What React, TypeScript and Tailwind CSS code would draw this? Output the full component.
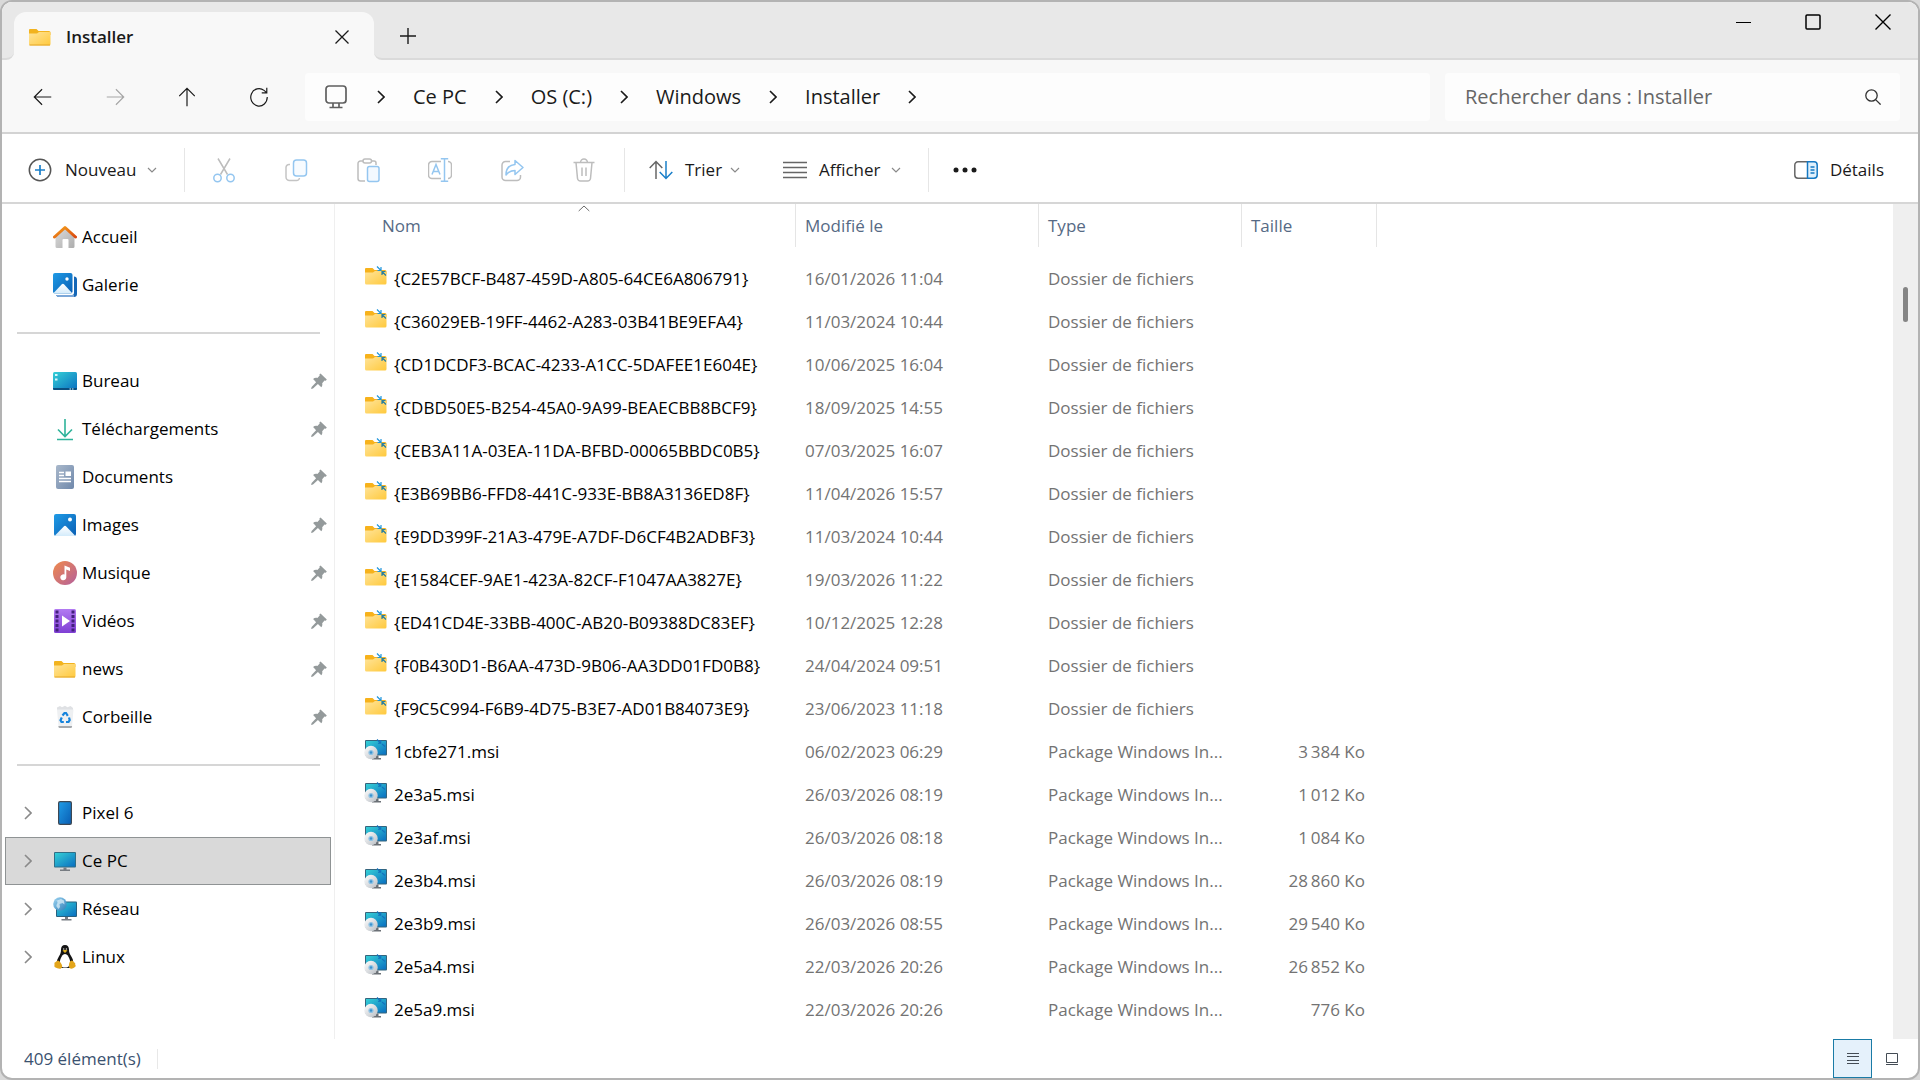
import React, { useState } from 'react';

type EntryKind = 'folder' | 'msi';

interface Entry {
  name: string;
  date: string;
  kind: EntryKind;
  size?: string;
}

interface Place {
  label: string;
  icon: React.ReactNode;
}

const ENTRIES: Entry[] = [
  { name: '{C2E57BCF-B487-459D-A805-64CE6A806791}', date: '16/01/2026 11:04', kind: 'folder' },
  { name: '{C36029EB-19FF-4462-A283-03B41BE9EFA4}', date: '11/03/2024 10:44', kind: 'folder' },
  { name: '{CD1DCDF3-BCAC-4233-A1CC-5DAFEE1E604E}', date: '10/06/2025 16:04', kind: 'folder' },
  { name: '{CDBD50E5-B254-45A0-9A99-BEAECBB8BCF9}', date: '18/09/2025 14:55', kind: 'folder' },
  { name: '{CEB3A11A-03EA-11DA-BFBD-00065BBDC0B5}', date: '07/03/2025 16:07', kind: 'folder' },
  { name: '{E3B69BB6-FFD8-441C-933E-BB8A3136ED8F}', date: '11/04/2026 15:57', kind: 'folder' },
  { name: '{E9DD399F-21A3-479E-A7DF-D6CF4B2ADBF3}', date: '11/03/2024 10:44', kind: 'folder' },
  { name: '{E1584CEF-9AE1-423A-82CF-F1047AA3827E}', date: '19/03/2026 11:22', kind: 'folder' },
  { name: '{ED41CD4E-33BB-400C-AB20-B09388DC83EF}', date: '10/12/2025 12:28', kind: 'folder' },
  { name: '{F0B430D1-B6AA-473D-9B06-AA3DD01FD0B8}', date: '24/04/2024 09:51', kind: 'folder' },
  { name: '{F9C5C994-F6B9-4D75-B3E7-AD01B84073E9}', date: '23/06/2023 11:18', kind: 'folder' },
  { name: '1cbfe271.msi', date: '06/02/2023 06:29', kind: 'msi', size: '3\u2009384 Ko' },
  { name: '2e3a5.msi', date: '26/03/2026 08:19', kind: 'msi', size: '1\u2009012 Ko' },
  { name: '2e3af.msi', date: '26/03/2026 08:18', kind: 'msi', size: '1\u2009084 Ko' },
  { name: '2e3b4.msi', date: '26/03/2026 08:19', kind: 'msi', size: '28\u2009860 Ko' },
  { name: '2e3b9.msi', date: '26/03/2026 08:55', kind: 'msi', size: '29\u2009540 Ko' },
  { name: '2e5a4.msi', date: '22/03/2026 20:26', kind: 'msi', size: '26\u2009852 Ko' },
  { name: '2e5a9.msi', date: '22/03/2026 20:26', kind: 'msi', size: '776 Ko' },
];

const TYPE_LABEL: Record<EntryKind, string> = {
  folder: 'Dossier de fichiers',
  msi: 'Package Windows In...',
};

const PATH = ['Ce PC', 'OS (C:)', 'Windows', 'Installer'];

// Gradients shared by the coloured icons
const IconDefs = () => (
  <svg width="0" height="0" className="absolute" aria-hidden="true">
    <defs>
      <linearGradient id="g-folder" x1="0" y1="0" x2="1" y2="1">
        <stop offset="0" stopColor="#ffe49a" />
        <stop offset="1" stopColor="#ffc93c" />
      </linearGradient>
      <linearGradient id="g-screen" x1="0" y1="0" x2="1" y2="1">
        <stop offset="0" stopColor="#35d0d6" />
        <stop offset="1" stopColor="#0a6fc0" />
      </linearGradient>
      <linearGradient id="g-photo" x1="0" y1="0" x2="1" y2="1">
        <stop offset="0" stopColor="#1f9be6" />
        <stop offset="1" stopColor="#0a5fb4" />
      </linearGradient>
      <linearGradient id="g-snow" x1="0" y1="0" x2="0" y2="1">
        <stop offset="0" stopColor="#ffffff" />
        <stop offset="1" stopColor="#d3ebfb" />
      </linearGradient>
      <linearGradient id="g-roof" x1="0" y1="0" x2="1" y2="1">
        <stop offset="0" stopColor="#f6a31c" />
        <stop offset="1" stopColor="#d9480f" />
      </linearGradient>
      <linearGradient id="g-wall" x1="0" y1="0" x2="1" y2="1">
        <stop offset="0" stopColor="#dcdcdc" />
        <stop offset="1" stopColor="#adadad" />
      </linearGradient>
      <linearGradient id="g-doc" x1="0" y1="0" x2="1" y2="1">
        <stop offset="0" stopColor="#a9b8cb" />
        <stop offset="1" stopColor="#6f88ab" />
      </linearGradient>
      <linearGradient id="g-music" x1="0" y1="0" x2="1" y2="1">
        <stop offset="0" stopColor="#f08a4b" />
        <stop offset="1" stopColor="#b4609c" />
      </linearGradient>
      <linearGradient id="g-video" x1="0" y1="0" x2="0" y2="1">
        <stop offset="0" stopColor="#b27af2" />
        <stop offset="1" stopColor="#7f3fd4" />
      </linearGradient>
      <linearGradient id="g-disc" x1="0" y1="0" x2="1" y2="1">
        <stop offset="0" stopColor="#ffffff" />
        <stop offset="1" stopColor="#b9bec4" />
      </linearGradient>
      <linearGradient id="g-globe" x1="0" y1="0" x2="1" y2="1">
        <stop offset="0" stopColor="#9fd6f3" />
        <stop offset="1" stopColor="#2f7fb8" />
      </linearGradient>
    </defs>
  </svg>
);

const FolderIcon = () => (
  <svg width="24" height="24" viewBox="0 0 24 24" aria-hidden="true">
    <path d="M1 5a1 1 0 0 1 1-1h6.5l2 2H21a1.500 1.500 0 0 1 1.500 1.500V10H1z" fill="#f2b31f" />
    <path d="M1 8.500h8l2-1.500h10.500a1 1 0 0 1 1 1V19a1.500 1.500 0 0 1-1.500 1.500H2.500A1.500 1.500 0 0 1 1 19z" fill="url(#g-folder)" />
    <path d="M1.500 20h20.500" stroke="#e3a62a" strokeWidth="1" />
  </svg>
);

const CompressedFolderIcon = () => (
  <svg width="24" height="24" viewBox="0 3 24 24" overflow="visible" aria-hidden="true">
    <path d="M1 5a1 1 0 0 1 1-1h6.500l2 2H21a1.500 1.500 0 0 1 1.500 1.500V10H1z" fill="#f7b21b" />
    <path d="M1 8.500h8l2-1.500h10.500a1 1 0 0 1 1 1V19a1.500 1.500 0 0 1-1.500 1.500H2.500A1.500 1.500 0 0 1 1 19z" fill="url(#g-folder)" />
    <path d="M13 2.500l3.500 3.500M17 3v3.500H13.500" stroke="#2196dc" strokeWidth="1.200" fill="none" />
    <path d="M22 11.500l-3.500-3.500M18 11V7.500H21.500" stroke="#2b7f9f" strokeWidth="1.200" fill="none" />
  </svg>
);

const MsiIcon = () => (
  <svg width="24" height="24" viewBox="0 3 24 24" overflow="visible" aria-hidden="true">
    <rect x="1" y="3" width="22" height="15.500" rx="1" fill="#35657d" />
    <rect x="2" y="4" width="20" height="13.500" fill="url(#g-screen)" />
    <path d="M11.500 18.500h3V21h2.500v1.500H8V21h3.500z" fill="#6b7076" />
    <path d="M13 2.500l3.500 3.500M16.800 3v3.300H14M21 9.500l-3-2.500" stroke="#1372bd" strokeWidth="1.100" fill="none" />
    <circle cx="7" cy="15.500" r="6.700" fill="url(#g-disc)" />
    <circle cx="7" cy="15.500" r="2.600" fill="#8fc3e4" />
    <circle cx="7" cy="15.500" r="1.200" fill="#3b93cf" />
  </svg>
);

const HomeIcon = () => (
  <svg width="24" height="24" viewBox="0 0 24 24" aria-hidden="true">
    <path d="M2.500 11L12 2.500 21.500 11v10.500a1.500 1.500 0 0 1-1.500 1.500h-4.500v-8a1 1 0 0 0-1-1h-4a1 1 0 0 0-1 1v8H4a1.500 1.500 0 0 1-1.500-1.500z" fill="url(#g-wall)" />
    <path d="M1.500 12L12 2.500 22.500 12" stroke="url(#g-roof)" strokeWidth="3" strokeLinecap="round" strokeLinejoin="round" fill="none" />
  </svg>
);

const GalleryIcon = () => (
  <svg width="24" height="24" viewBox="0 0 24 24" aria-hidden="true">
    <path d="M21 3.500c1.800.2 3 1 3 3V21a3 3 0 0 1-3 3H6c-1.500 0-2.500-.7-2.800-2H19a2 2 0 0 0 2-2z" fill="#1567b7" />
    <path d="M3.200 22H21v2H6c-1.500 0-2.500-.7-2.800-2z" fill="#7ba7d8" />
    <rect x="0" y="0" width="19.500" height="20.500" rx="2" fill="url(#g-photo)" />
    <path d="M.6 20L8.600 11.500a1.800 1.800 0 0 1 2.600 0L19 20c-.3.300-.7.500-1.200.5H2c-.6 0-1-.2-1.400-.5z" fill="url(#g-snow)" />
    <circle cx="14" cy="6" r="1.700" fill="#fff" />
  </svg>
);

const DesktopIcon = () => (
  <svg width="24" height="24" viewBox="0 0 24 24" aria-hidden="true">
    <rect x="0" y="3" width="24" height="18" rx="1.500" fill="url(#g-screen)" />
    <path d="M0 19h24v.8a1.200 1.200 0 0 1-1.200 1.200H1.200A1.200 1.200 0 0 1 0 19.800z" fill="#0b4f80" />
    <path d="M2 5h2.500v2H2zM2 9.500h2.500v2H2zM16.500 19.500h1.500v1h-1.500zM19 19.500h1.500v1H19z" fill="#d7f7fb" />
  </svg>
);

const DownloadsIcon = () => (
  <svg width="24" height="24" viewBox="0 0 24 24" fill="none" stroke="#2fb39a" strokeWidth="1.600" aria-hidden="true">
    <path d="M12 2v17M5 12.500l7 7 7-7M4 22.500h16" />
  </svg>
);

const DocumentsIcon = () => (
  <svg width="24" height="24" viewBox="0 0 24 24" aria-hidden="true">
    <rect x="3" y="0" width="18" height="24" rx="2" fill="url(#g-doc)" />
    <path d="M6 7.500h5M6 10.500h5M6 13.500h12M6 16.500h12" stroke="#fff" strokeWidth="1.300" />
    <rect x="12.500" y="6.500" width="5.500" height="4.500" fill="#fff" />
  </svg>
);

const PicturesIcon = () => (
  <svg width="24" height="24" viewBox="0 0 24 24" aria-hidden="true">
    <rect x="1" y="1" width="22" height="22" rx="2" fill="url(#g-photo)" />
    <path d="M2 22.400l8.800-9a1.700 1.700 0 0 1 2.400 0l8.800 9c-.3.400-.6.600-1 .6H3c-.4 0-.7-.2-1-.6z" fill="url(#g-snow)" />
    <circle cx="17" cy="6.500" r="2" fill="#fff" />
  </svg>
);

const MusicIcon = () => (
  <svg width="24" height="24" viewBox="0 0 24 24" aria-hidden="true">
    <circle cx="12" cy="12" r="12" fill="url(#g-music)" />
    <path d="M11.500 4.500l5.500 2.300v3.200l-3.700-1.500v7.800a3 3 0 1 1-1.800-2.700z" fill="#fff" />
  </svg>
);

const VideosIcon = () => (
  <svg width="24" height="24" viewBox="0 0 24 24" aria-hidden="true">
    <rect x="1" y="0" width="22" height="24" rx="1.500" fill="url(#g-video)" />
    <path d="M2.500 1.500h3v3h-3zM2.500 6h3v3h-3zM2.500 10.500h3v3h-3zM2.500 15h3v3h-3zM2.500 19.500h3v3h-3zM18.500 1.500h3v3h-3zM18.500 6h3v3h-3zM18.500 10.500h3v3h-3zM18.500 15h3v3h-3zM18.500 19.500h3v3h-3z" fill="#43207c" />
    <path d="M9 6.500v11l8-5.500z" fill="#fff" />
  </svg>
);

const RecycleIcon = () => (
  <svg width="24" height="24" viewBox="0 0 24 24" aria-hidden="true">
    <path d="M4 2.500l3-1.500 2 1.200L12 .8l2.500 1.400L17.500 1l2.500 2v2H4z" fill="#dfe1e4" />
    <path d="M4 4.500h16.500L19 21.500a1.500 1.500 0 0 1-1.500 1.500H7a1.500 1.500 0 0 1-1.500-1.500z" fill="#eef0f2" />
    <path d="M5.400 21h13.700l-.1.900a1.300 1.300 0 0 1-1.200 1.100H6.800a1.300 1.300 0 0 1-1.300-1.100z" fill="#a5a9ad" />
    <g fill="none" stroke="#1583dc" strokeWidth="2.200">
      <path d="M9.500 10.500l2-2.500h1.500l1.800 2.800" />
      <path d="M16 12.500l.7 2.500-1.200 2h-2.500" />
      <path d="M10.800 17H8.500l-1-1.800 1.300-2.700" />
    </g>
  </svg>
);

const PhoneIcon = () => (
  <svg width="24" height="24" viewBox="0 0 24 24" aria-hidden="true">
    <rect x="5" y="0" width="14" height="24" rx="2" fill="#3d4854" />
    <rect x="6.200" y="1.200" width="11.600" height="21.600" rx="1" fill="url(#g-photo)" />
  </svg>
);

const ComputerIcon = () => (
  <svg width="24" height="24" viewBox="0 0 24 24" aria-hidden="true">
    <rect x="1" y="3" width="22" height="15.500" rx="1" fill="#2f6f87" />
    <rect x="2" y="4" width="20" height="13.500" fill="url(#g-screen)" />
    <path d="M10.500 18.500h3V20.500H17V22H7v-1.500h3.500z" fill="#777c82" />
  </svg>
);

const NetworkIcon = () => (
  <svg width="24" height="24" viewBox="0 0 24 24" aria-hidden="true">
    <rect x="3" y="4.500" width="21" height="15.500" rx="1" fill="#28617f" />
    <rect x="4" y="5.500" width="19" height="13.500" fill="url(#g-screen)" />
    <path d="M12 20h3v2h3.500v1.500H8.500V22H12z" fill="#777c82" />
    <circle cx="7" cy="7" r="6.800" fill="url(#g-globe)" />
    <path d="M1.500 4.500C3 3 4.500 4 4.500 5.500S3 7.500 3.500 9.500L5.500 12 7 10l-.5-3 3-1 2 1.500-.5-4L8 2z" fill="#e3f2fb" fillOpacity=".7" />
  </svg>
);

const LinuxIcon = () => (
  <svg width="24" height="24" viewBox="0 0 24 24" aria-hidden="true">
    <path d="M12 0c2.700 0 4 1.800 4 4.500 0 3 .6 4.200 2.200 6.700 1.400 2.200 2.300 4.300 2 7.300L17 23H7.500L3.800 18.500c-.2-3 1-5 2.200-7.200C7.400 9 8 7.500 8 4.500 8 1.800 9.300 0 12 0z" fill="#151515" />
    <path d="M12 9c2.300 0 3.500 2.500 4.500 5s.8 5-.5 7c-.8 1-2.300 1.500-4 1.500S8.800 22 8 21c-1.300-2-1.500-4.500-.5-7S9.700 9 12 9z" fill="#fff" />
    <path d="M9.500 5.500L12 4.700l2.500.8L12 8z" fill="#e0b020" />
    <circle cx="10.700" cy="4" r=".7" fill="#ddd" />
    <circle cx="13.400" cy="4" r=".7" fill="#ddd" />
    <path d="M5 15.500c1.500 0 2.800 2.500 3.800 4.200.9 1.700 0 4-2 4-1.800 0-3.300-1-4.800-1.500-1-.5-.5-1.800-.5-3s-.3-1.700.8-2 1.500-1.700 2.700-1.700z" fill="#e3a51a" />
    <path d="M19 15.500c1 0 1.300 1.200 2 1.800 1 .7 1.500.8 1.200 1.700-.2 1 1 1.500.3 2.500-1 1-2.700 2.200-4.300 2.200-2 0-2.700-2-2.200-4.200.3-1.700.8-4 3-4z" fill="#e3a51a" />
  </svg>
);

const PinIcon = () => (
  <svg width="16" height="16" viewBox="0 0 16 16" fill="#949a9b" aria-hidden="true">
    <path d="M9.500.4L15.800 6.500l-1 1.300-1.300-.2-2.300 2.600c.4 1.600 0 3-.9 4.100L6.900 11.100 2 15.600l-1.900.4.500-1.900 4.500-4.900-3-3.200c1.200-1.100 2.700-1.500 4.300-1L8.700 2.600l-.3-1.200z" />
  </svg>
);

const ChevronRight = ({ className }: { className?: string }) => (
  <svg width="8" height="14" viewBox="0 0 8 14" fill="none" stroke="currentColor" strokeWidth="1.600" className={className} aria-hidden="true">
    <path d="M1 1l6 6-6 6" />
  </svg>
);

const ChevronDown = () => (
  <svg width="10" height="10" viewBox="0 0 10 10" fill="none" stroke="#8a8a8a" strokeWidth="1.200" aria-hidden="true">
    <path d="M1 3l4 4 4-4" />
  </svg>
);

const NAV_BUTTONS = [
  { label: 'Précédent', d: 'M21 12H3M11 3.500L2.500 12l8.500 8.500', color: 'text-[#1a1a1a]' },
  { label: 'Suivant', d: 'M3 12h18M13 3.500l8.500 8.500-8.500 8.500', color: 'text-[#a6a6a6]' },
  { label: 'Dossier parent', d: 'M12 22V2.500M3.500 11L12 2.500l8.500 8.500', color: 'text-[#1a1a1a]' },
  { label: 'Actualiser', d: 'M21 12a9 9.500 0 1 1-3.500-7.200L20 7M20.500 2v5.500H15', color: 'text-[#1a1a1a]' },
];

const EDIT_ACTIONS: Place[] = [
  {
    label: 'Couper',
    icon: (
      <>
        <path d="M6 .5l9.500 16M18 .5L8.500 16.500" stroke="#bdbdbd" />
        <circle cx="5.500" cy="20" r="3.700" stroke="#94c6f0" />
        <circle cx="18.500" cy="20" r="3.700" stroke="#94c6f0" />
      </>
    ),
  },
  {
    label: 'Copier',
    icon: (
      <>
        <path d="M6 6.500H5a3 3 0 0 0-3 3V19a3.500 3.500 0 0 0 3.500 3.500h7a3 3 0 0 0 3-2.500" stroke="#c4c4c4" />
        <rect x="9.500" y="2" width="13" height="16" rx="3" stroke="#94c6f0" fill="#f7fbff" />
      </>
    ),
  },
  {
    label: 'Coller',
    icon: (
      <>
        <path d="M7 3H4.500A2.500 2.500 0 0 0 2 5.500v15A2.500 2.500 0 0 0 4.500 23H9M15.500 3H18a2 2 0 0 1 2 2v2" stroke="#bdbdbd" />
        <rect x="7" y="1" width="8.500" height="4" rx="2" stroke="#bdbdbd" />
        <rect x="11.500" y="8.500" width="11.500" height="15" rx="2" stroke="#94c6f0" fill="#f3f9ff" />
      </>
    ),
  },
  {
    label: 'Renommer',
    icon: (
      <>
        <path d="M13 3.500H4a3.500 3.500 0 0 0-3.500 3.500v10A3.500 3.500 0 0 0 4 20.500h9M20 3.500a3.500 3.500 0 0 1 3.500 3.500v10a3.500 3.500 0 0 1-3.500 3.500" stroke="#bdbdbd" />
        <path d="M16.500.8v22.400M12.800.8h7.400M12.800 23.200h7.400M4 16.500L8 6.500l4 10M5.300 13.500h5.400" stroke="#94c6f0" />
      </>
    ),
  },
  {
    label: 'Partager',
    icon: (
      <>
        <path d="M10 3.500H5.500A3.500 3.500 0 0 0 2 7v12a3.500 3.500 0 0 0 3.500 3.500H17a3.500 3.500 0 0 0 3.500-3.500v-2" stroke="#bdbdbd" />
        <path d="M15 2.500l8 7-8 7v-4c-4 0-6.500 1-9 4.500 0-6 3-10 9-10.500z" stroke="#94c6f0" strokeLinejoin="round" />
      </>
    ),
  },
  {
    label: 'Supprimer',
    icon: (
      <>
        <path d="M1.500 4.500h21M8.500 4.500a3.500 3.500 0 0 1 7 0M4 4.500l1.500 16A3 3 0 0 0 8.500 23h7a3 3 0 0 0 3-2.500l1.500-16M10 9.500v8.500M14 9.500v8.500" stroke="#bdbdbd" />
      </>
    ),
  },
];

const SHORTCUTS: Place[] = [
  { label: 'Bureau', icon: <DesktopIcon /> },
  { label: 'Téléchargements', icon: <DownloadsIcon /> },
  { label: 'Documents', icon: <DocumentsIcon /> },
  { label: 'Images', icon: <PicturesIcon /> },
  { label: 'Musique', icon: <MusicIcon /> },
  { label: 'Vidéos', icon: <VideosIcon /> },
  { label: 'news', icon: <FolderIcon /> },
  { label: 'Corbeille', icon: <RecycleIcon /> },
];

const DEVICES: Place[] = [
  { label: 'Pixel 6', icon: <PhoneIcon /> },
  { label: 'Ce PC', icon: <ComputerIcon /> },
  { label: 'Réseau', icon: <NetworkIcon /> },
  { label: 'Linux', icon: <LinuxIcon /> },
];

const TitleBar = () => (
  <div className="flex h-[58px] bg-[#f8f8f8]">
    <div className="w-3 rounded-br-lg border-b-2 border-[#dadada] bg-[#e8e8e8]" />
    <div className="flex w-[360px] bg-[#e8e8e8] pt-[10px]">
      <div className="flex flex-1 items-center rounded-t-xl bg-[#f8f8f8] pl-[14px] pr-6 pt-px">
        <FolderIcon />
        <span className="ml-[14px] flex-1 text-[17px] font-semibold">Installer</span>
        <button aria-label="Fermer l'onglet">
          <svg width="16" height="16" viewBox="0 0 16 16" stroke="#1a1a1a" strokeWidth="1.300" aria-hidden="true">
            <path d="M1.500 1.500l13 13M14.500 1.500l-13 13" />
          </svg>
        </button>
      </div>
    </div>
    <div className="flex flex-1 justify-between rounded-bl-lg border-b-2 border-[#dadada] bg-[#e8e8e8]">
      <button aria-label="Nouvel onglet" className="ml-[26px] mt-3">
        <svg width="16" height="16" viewBox="0 0 16 16" stroke="#1a1a1a" strokeWidth="1.400" aria-hidden="true">
          <path d="M8 0v16M0 8h16" />
        </svg>
      </button>
      <div className="flex h-10">
        <button aria-label="Réduire" className="flex w-[70px] items-center justify-center">
          <svg width="16" height="16" viewBox="0 0 16 16" stroke="#000" aria-hidden="true">
            <path d="M1 8.500h15" />
          </svg>
        </button>
        <button aria-label="Agrandir" className="flex w-[70px] items-center justify-center">
          <svg width="16" height="16" viewBox="0 0 16 16" fill="none" stroke="#000" strokeWidth="1.500" aria-hidden="true">
            <rect x="1" y="1" width="14" height="14" rx="1" />
          </svg>
        </button>
        <button aria-label="Fermer" className="flex w-[70px] items-center justify-center">
          <svg width="16" height="16" viewBox="0 0 16 16" stroke="#000" strokeWidth="1.400" aria-hidden="true">
            <path d="M.5.500l15 15M15.500.500l-15 15" />
          </svg>
        </button>
      </div>
    </div>
  </div>
);

const AddressBar = () => (
  <div className="flex h-[74px] items-center border-b-2 border-[#d3d3d3] bg-[#f8f8f8] pl-[5px] pr-[18px] pt-[2px]">
    {NAV_BUTTONS.map((b) => (
      <button key={b.label} aria-label={b.label} className={`flex w-[72px] justify-center ${b.color}`}>
        <svg width="22" height="22" viewBox="0 0 24 24" fill="none" stroke="currentColor" strokeWidth="1.300" aria-hidden="true">
          <path d={b.d} />
        </svg>
      </button>
    ))}
    <nav aria-label="Chemin" className="ml-[10px] flex h-12 flex-1 items-center rounded bg-[#fdfdfd] pl-5 text-[20px]">
      <svg width="22" height="24" viewBox="0 0 22 24" fill="none" stroke="#5f5f5f" strokeWidth="1.700" aria-hidden="true">
        <rect x="1" y="1" width="20" height="17" rx="3" />
        <path d="M8 18v4M14 18v4M4.500 22.500h13" />
      </svg>
      <ChevronRight className="ml-[30px]" />
      {PATH.map((part) => (
        <React.Fragment key={part}>
          <a href="#" className="ml-7">{part}</a>
          <ChevronRight className="ml-7" />
        </React.Fragment>
      ))}
    </nav>
    <div className="ml-[15px] flex h-12 w-[455px] items-center rounded bg-[#fdfdfd] pl-5 pr-[19px]">
      <input
        type="search"
        aria-label="Rechercher dans : Installer"
        placeholder="Rechercher dans : Installer"
        className="min-w-0 flex-1 bg-transparent text-[20px] outline-none placeholder:text-[#666666]"
      />
      <svg width="16" height="16" viewBox="0 0 16 16" fill="none" stroke="#333" strokeWidth="1.300" aria-hidden="true">
        <circle cx="6.500" cy="6.500" r="5.700" />
        <path d="M10.600 10.600l5 5" />
      </svg>
    </div>
  </div>
);

const Separator = () => <div className="h-11 w-px shrink-0 bg-[#e6e6e6]" />;

const Toolbar = () => (
  <div className="flex h-[70px] items-center border-b-2 border-[#d6d6d6] bg-white pt-1 text-[17px]">
    <button className="flex w-[182px] items-center pl-[26px]">
      <svg width="24" height="24" viewBox="0 0 24 24" fill="none" strokeWidth="1.500" aria-hidden="true">
        <circle cx="12" cy="12" r="10.700" stroke="#555" />
        <path d="M12 7v10M7 12h10" stroke="#1a7fc9" strokeWidth="1.700" />
      </svg>
      <span className="ml-[13px] mr-[11px]">Nouveau</span>
      <ChevronDown />
    </button>
    <Separator />
    <div className="flex pl-[3px] pr-1">
      {EDIT_ACTIONS.map((a) => (
        <button key={a.label} aria-label={a.label} disabled className="flex w-[72px] justify-center">
          <svg width="24" height="26" viewBox="0 0 24 24" fill="none" strokeWidth="1.500" aria-hidden="true">
            {a.icon}
          </svg>
        </button>
      ))}
    </div>
    <Separator />
    <button className="flex w-[134px] items-center pl-6">
      <svg width="24" height="20" viewBox="0 0 24 20" fill="none" strokeWidth="1.500" aria-hidden="true">
        <path d="M7 19V1.500M.7 8L7 1.500 13.300 8" stroke="#666" />
        <path d="M17 1v17.500M10.700 12l6.300 6.500 6.300-6.500" stroke="#1a7fc9" />
      </svg>
      <span className="ml-3 mr-2">Trier</span>
      <ChevronDown />
    </button>
    <button className="flex w-[169px] items-center pl-6">
      <svg width="24" height="18" viewBox="0 0 24 18" stroke="#666" strokeWidth="1.500" aria-hidden="true">
        <path d="M0 1.500h24M0 6.500h24M0 11.500h24M0 16.500h24" />
      </svg>
      <span className="ml-3 mr-[10px]">Afficher</span>
      <ChevronDown />
    </button>
    <Separator />
    <button aria-label="Plus d'options" className="ml-6">
      <svg width="24" height="6" viewBox="0 0 24 6" fill="#1a1a1a" aria-hidden="true">
        <circle cx="3" cy="3" r="2.500" />
        <circle cx="12" cy="3" r="2.500" />
        <circle cx="21" cy="3" r="2.500" />
      </svg>
    </button>
    <button className="ml-auto mr-[34px] flex items-center gap-3">
      <svg width="24" height="18" viewBox="0 0 24 18" fill="none" strokeWidth="1.500" aria-hidden="true">
        <path d="M13 .8H4A3.200 3.200 0 0 0 .8 4v10A3.200 3.200 0 0 0 4 17.200h9" stroke="#666" />
        <path d="M13.500.8H20A3.200 3.200 0 0 1 23.200 4v10a3.200 3.200 0 0 1-3.200 3.200h-6.500z" stroke="#1578c2" fill="#dff0fc" />
        <path d="M16.500 6h4M16.500 9h4M16.500 12h4" stroke="#1578c2" />
      </svg>
      Détails
    </button>
  </div>
);

const PlaceLink: React.FC<{ place: Place; pinned?: boolean; expandable?: boolean; selected?: boolean }> = ({
  place,
  pinned,
  expandable,
  selected,
}) => (
  <a
    href="#"
    aria-current={selected ? 'page' : undefined}
    className={`ml-[3px] mr-[3px] flex h-12 items-center border pr-[3px] ${
      selected ? 'border-[#8f9394] bg-[#d9d9d9]' : 'border-transparent'
    }`}
  >
    <span className="flex w-[47px] pl-[18px] text-[#8a8a8a]">{expandable && <ChevronRight />}</span>
    {place.icon}
    <span className="ml-[5px] flex-1">{place.label}</span>
    {pinned && <PinIcon />}
  </a>
);

const Divider = () => (
  <div className="flex h-12 items-center pl-[15px] pr-[14px]">
    <hr className="w-full border-t-2 border-[#d6d6d6]" />
  </div>
);

const Sidebar = () => (
  <nav aria-label="Emplacements" className="w-[333px] shrink-0 border-r border-[#efefef] pt-[9px] text-[17px] text-black">
    <PlaceLink place={{ label: 'Accueil', icon: <HomeIcon /> }} />
    <PlaceLink place={{ label: 'Galerie', icon: <GalleryIcon /> }} />
    <Divider />
    {SHORTCUTS.map((p) => (
      <PlaceLink key={p.label} place={p} pinned />
    ))}
    <Divider />
    {DEVICES.map((p) => (
      <PlaceLink key={p.label} place={p} expandable selected={p.label === 'Ce PC'} />
    ))}
  </nav>
);

const FileTable = () => (
  <table className="w-[1042px] table-fixed self-start text-left text-[17px]">
    <colgroup>
      <col className="w-[461px]" />
      <col className="w-[243px]" />
      <col className="w-[203px]" />
      <col className="w-[135px]" />
    </colgroup>
    <thead>
      <tr className="h-[53px] align-top text-[#566a85]">
        <th scope="col" aria-sort="ascending" className="relative p-0 font-normal">
          <button className="flex h-[43px] w-full items-center border-r border-[#e5e5e5] pl-[47px]">Nom</button>
          <svg width="12" height="7" viewBox="0 0 12 7" fill="none" stroke="#6b6b6b" className="absolute left-[243px] top-[1px]" aria-hidden="true">
            <path d="M.7 6L6 1l5.300 5" />
          </svg>
        </th>
        {['Modifié le', 'Type', 'Taille'].map((label) => (
          <th key={label} scope="col" className="p-0 font-normal">
            <button className="flex h-[43px] w-full items-center border-r border-[#e5e5e5] pl-[9px]">{label}</button>
          </th>
        ))}
      </tr>
    </thead>
    <tbody>
      {ENTRIES.map((entry) => (
        <tr key={entry.name} className="h-[43px] whitespace-nowrap text-[#737373]">
          <td className="p-0 pl-[29px] text-black">
            <div className="flex items-center gap-[6px]">
              {entry.kind === 'folder' ? <CompressedFolderIcon /> : <MsiIcon />}
              {entry.name}
            </div>
          </td>
          <td className="p-0 pl-[9px]">{entry.date}</td>
          <td className="p-0 pl-[9px]">{TYPE_LABEL[entry.kind]}</td>
          <td className="p-0 pr-3 text-right">{entry.size}</td>
        </tr>
      ))}
    </tbody>
  </table>
);

const StatusBar: React.FC<{ view: string; onViewChange: (view: string) => void }> = ({ view, onViewChange }) => (
  <footer className="flex h-[39px] items-center text-[17px] text-[#3b5270]">
    <span className="pl-[22px]">409 élément(s)</span>
    <div className="ml-4 h-5 w-px bg-[#e8e8e8]" />
    <div className="ml-auto mr-[7px] flex">
      <button
        aria-label="Détails"
        aria-pressed={view === 'details'}
        onClick={() => onViewChange('details')}
        className={`flex h-[39px] w-[39px] items-center justify-center border ${
          view === 'details' ? 'border-[#1a7ba6] bg-[#e5f1fb]' : 'border-transparent'
        }`}
      >
        <svg width="12" height="11" viewBox="0 0 12 11" stroke="#444c55" aria-hidden="true">
          <path d="M0 .5h12M0 3.500h12M0 7.500h12M0 10.500h12" />
        </svg>
      </button>
      <button
        aria-label="Grandes icônes"
        aria-pressed={view === 'icons'}
        onClick={() => onViewChange('icons')}
        className={`flex h-[39px] w-[39px] items-center justify-center border ${
          view === 'icons' ? 'border-[#1a7ba6] bg-[#e5f1fb]' : 'border-transparent'
        }`}
      >
        <svg width="12" height="12" viewBox="0 0 12 12" fill="none" stroke="#444c55" aria-hidden="true">
          <path d="M.5.500h11v9H.5zM0 11.500h12" />
        </svg>
      </button>
    </div>
  </footer>
);

const App: React.FC = () => {
  const [view, setView] = useState('details');

  return (
    <div className="flex min-h-screen bg-[#d9d9d9] font-['Open_Sans','Noto_Sans',sans-serif] text-[#1a1a1a]">
      <IconDefs />
      <div className="flex flex-1 flex-col overflow-hidden rounded-xl border-2 border-[#b3b3b3] bg-white">
        <TitleBar />
        <AddressBar />
        <Toolbar />
        <main className="flex flex-1">
          <Sidebar />
          <FileTable />
          <div className="ml-auto w-[25px] bg-[#efefef] pl-[10px] pt-[83px]">
            <div className="h-[35px] w-[5px] rounded-full bg-[#858585]" />
          </div>
        </main>
        <StatusBar view={view} onViewChange={setView} />
      </div>
    </div>
  );
};

export default App;
